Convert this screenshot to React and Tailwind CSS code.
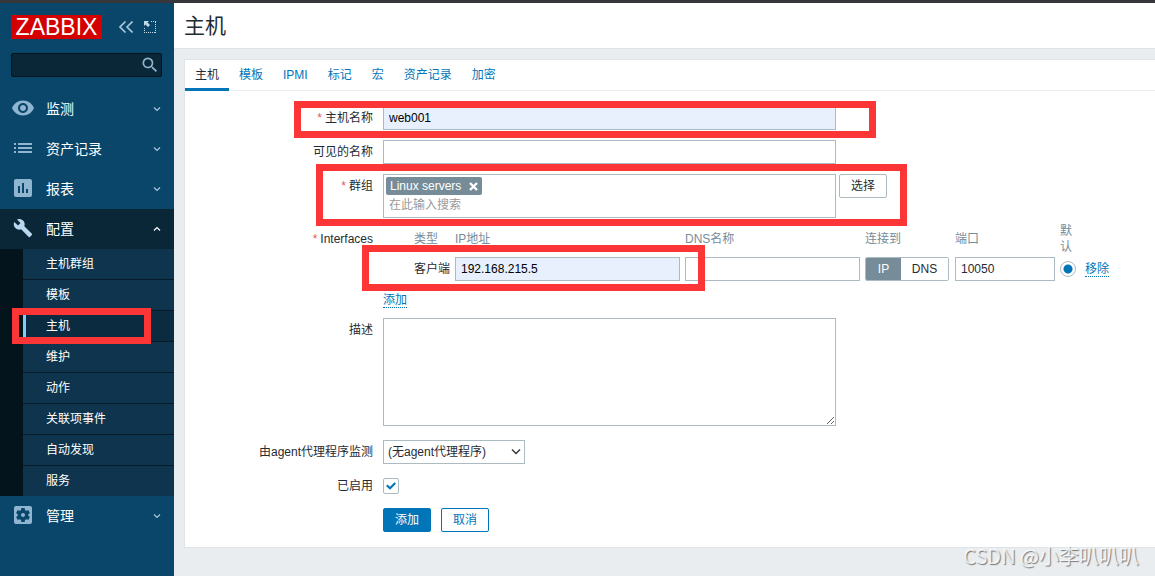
import { useState } from 'react'
import {
  MdAssessment,
  MdBuild,
  MdList,
  MdSearch,
  MdSettingsApplications,
  MdVisibility,
} from 'react-icons/md'

const configItems = [
  '主机群组',
  '模板',
  '主机',
  '维护',
  '动作',
  '关联项事件',
  '自动发现',
  '服务',
]

const tabs = ['主机', '模板', 'IPMI', '标记', '宏', '资产记录', '加密']

const inputClass =
  'block h-6 border border-[#acbbc2] bg-white px-[5px] text-xs text-[#1f2c33] outline-none focus:border-[#0275b8]'

const filledInputClass =
  'block h-6 border border-[#acbbc2] bg-[#e8f0fe] px-[5px] text-xs text-black outline-none focus:border-[#0275b8]'

const linkButtonClass =
  'h-4 cursor-pointer border-b border-dotted border-[#0275b8] text-xs leading-[14px] whitespace-nowrap text-[#0275b8]'

function Chevron({ up }) {
  return (
    <svg className="h-[6px] w-2" viewBox="0 0 8 6" fill="none">
      <path
        d={up ? 'M1 4.5 4 1.5 7 4.5' : 'M1 1.5 4 4.5 7 1.5'}
        stroke="currentColor"
        strokeWidth="1.2"
      />
    </svg>
  )
}

function MenuItem({ icon: Icon, iconClass = 'size-6', label, open }) {
  return (
    <a
      href="#"
      className={
        open
          ? 'flex h-10 items-center bg-[#0a2738] pr-[13px] pl-[11px] text-sm text-white'
          : 'flex h-10 items-center pr-[13px] pl-[11px] text-sm text-white'
      }
    >
      <span
        className={
          open
            ? 'flex w-6 justify-center pb-[2px] text-[#b8d8ee]'
            : 'flex w-6 justify-center pb-[2px] text-[#8fb5d1]'
        }
      >
        <Icon className={iconClass} />
      </span>
      <span className="ml-[11px] flex-1">{label}</span>
      <span className={open ? 'text-white' : 'text-[#a9c8de]'}>
        <Chevron up={open} />
      </span>
    </a>
  )
}

function Highlight({ className }) {
  return (
    <div
      className={`pointer-events-none absolute z-10 border-[7px] border-[#fc3636] ${className}`}
    />
  )
}

function Sidebar() {
  return (
    <aside className="w-[174px] shrink-0 bg-[#0a466a]">
      <div className="flex items-center pt-3 pl-[11px]">
        <a
          href="#"
          className="flex h-6 w-[91px] items-center justify-center bg-[#d40000] text-[23px] leading-6 text-white"
        >
          ZABBIX
        </a>
        <button type="button" aria-label="收起侧边栏" className="ml-[17px]">
          <svg className="h-3 w-[14px]" viewBox="0 0 14 12" fill="none">
            <path
              d="M6.5.5 1 6l5.500 5.500M13.500.5 8 6l5.500 5.500"
              stroke="#a9c8de"
              strokeWidth="1.600"
            />
          </svg>
        </button>
        <button type="button" aria-label="隐藏侧边栏" className="ml-[11px]">
          <svg className="size-3" viewBox="0 0 12 12" fill="none">
            <path
              d="M7 .5h5M.5 7v5M11.500 1v11M0 11.500h12"
              stroke="#c3d9e8"
              strokeDasharray="1 1"
            />
            <path d="M0 0h5L3.500 1.500 6 4 4 6 1.500 3.500 0 5z" fill="#c3d9e8" />
          </svg>
        </button>
      </div>

      <form
        role="search"
        className="mt-[14px] mr-3 ml-[11px] flex h-6 items-center rounded-xs border border-[#03141e] bg-[#0a2738]"
      >
        <input
          type="text"
          aria-label="搜索"
          className="min-w-0 flex-1 bg-transparent px-1 text-xs text-white outline-none"
        />
        <button type="button" aria-label="搜索" className="mr-[1px]">
          <MdSearch className="size-5 text-[#8fb5d1]" />
        </button>
      </form>

      <nav className="mt-3">
        <MenuItem icon={MdVisibility} label="监测" />
        <MenuItem icon={MdList} label="资产记录" />
        <MenuItem icon={MdAssessment} label="报表" />
        <MenuItem icon={MdBuild} iconClass="size-5" label="配置" open />
        <ul className="bg-[#04141d] pl-[23px]">
          {configItems.map((item) => (
            <li
              key={item}
              className="relative border-b border-[#061a27] last:border-b-0"
            >
              <a
                href="#"
                className={
                  item === '主机'
                    ? 'block h-[30px] border-l-[3px] border-[#7fcdfb] bg-[#0b2b40] pl-5 text-xs leading-[30px] text-white'
                    : 'block h-[30px] bg-[#0f344d] pl-[23px] text-xs leading-[30px] text-white'
                }
              >
                {item}
              </a>
              {item === '主机' ? (
                <Highlight className="-top-[3px] right-[23px] -bottom-[3px] -left-[11px]" />
              ) : null}
            </li>
          ))}
        </ul>
        <MenuItem icon={MdSettingsApplications} label="管理" />
      </nav>
    </aside>
  )
}

function FormRow({
  label,
  htmlFor,
  required,
  className = 'mb-[10px]',
  labelClass = 'leading-6',
  children,
}) {
  return (
    <div className={`relative flex ${className}`}>
      <label
        htmlFor={htmlFor}
        className={`mr-[10px] w-[188px] shrink-0 text-right ${labelClass}`}
      >
        {required ? <span className="mr-[3px] text-[#e45959]">*</span> : null}
        {label}
      </label>
      {children}
    </div>
  )
}

function InterfaceTable() {
  const [connect, setConnect] = useState('IP')

  return (
    <table className="border-collapse text-left">
      <thead>
        <tr className="h-8 leading-4 text-[#768d99]">
          <th className="w-[72px] min-w-[72px] pl-[31px] font-normal">类型</th>
          <th className="font-normal">IP地址</th>
          <th className="font-normal">DNS名称</th>
          <th className="font-normal">连接到</th>
          <th className="font-normal">端口</th>
          <th className="font-normal">
            <div className="w-4">默认</div>
          </th>
          <th />
        </tr>
      </thead>
      <tbody>
        <tr>
          <td className="pt-[2px] pl-[31px]">客户端</td>
          <td className="pt-[2px] pr-[5px]">
            <input
              type="text"
              aria-label="IP地址"
              defaultValue="192.168.215.5"
              className={`${filledInputClass} w-[225px]`}
            />
          </td>
          <td className="pt-[2px] pr-[5px]">
            <input
              type="text"
              aria-label="DNS名称"
              className={`${inputClass} w-[175px]`}
            />
          </td>
          <td className="pt-[2px] pr-[6px]">
            <div className="flex h-6 w-[84px] overflow-hidden rounded-xs border border-[#acbbc2]">
              {['IP', 'DNS'].map((type) => (
                <label
                  key={type}
                  className={`relative cursor-pointer text-center leading-[22px] ${
                    type === 'IP' ? 'w-[35px]' : 'flex-1'
                  } ${connect === type ? 'bg-[#768d99] text-white' : 'bg-white'}`}
                >
                  <input
                    type="radio"
                    name="connect"
                    className="sr-only"
                    checked={connect === type}
                    onChange={() => setConnect(type)}
                  />
                  {type}
                </label>
              ))}
            </div>
          </td>
          <td className="pt-[2px] pr-[5px]">
            <input
              type="text"
              aria-label="端口"
              defaultValue="10050"
              className={`${inputClass} w-[100px]`}
            />
          </td>
          <td className="pt-[2px] pr-[9px]">
            <input
              type="radio"
              name="default-interface"
              aria-label="默认"
              defaultChecked
              className="block size-4 appearance-none rounded-full border border-[#acbbc2] bg-white checked:bg-[radial-gradient(circle,#0275b8_4px,white_5px)]"
            />
          </td>
          <td className="pt-[2px]">
            <button type="button" className={`block ${linkButtonClass}`}>
              移除
            </button>
          </td>
        </tr>
      </tbody>
    </table>
  )
}

function HostForm() {
  return (
    <form className="py-[15px]">
      <FormRow label="主机名称" htmlFor="host" required>
        <input
          id="host"
          type="text"
          defaultValue="web001"
          className={`${filledInputClass} w-[453px]`}
        />
        <Highlight className="-top-[5px] left-[109px] h-[37px] w-[582px]" />
      </FormRow>

      <FormRow label="可见的名称" htmlFor="visible-name">
        <input
          id="visible-name"
          type="text"
          className={`${inputClass} w-[453px]`}
        />
      </FormRow>

      <FormRow label="群组" htmlFor="groups" required className="mb-[5px]">
        <div className="h-11 w-[453px] border border-[#acbbc2] p-[2px]">
          <span className="flex h-[18px] w-fit items-center rounded-xs bg-[#768d99] px-1 text-white">
            Linux servers
            <button type="button" aria-label="移除 Linux servers" className="ml-2">
              <svg className="size-[9px]" viewBox="0 0 9 9" fill="none">
                <path
                  d="M1 1l7 7M8 1 1 8"
                  stroke="currentColor"
                  strokeWidth="2.400"
                />
              </svg>
            </button>
          </span>
          <input
            id="groups"
            type="text"
            placeholder="在此输入搜索"
            className="block h-5 w-full px-[3px] text-xs outline-none placeholder:text-[#9a9a9a]"
          />
        </div>
        <button
          type="button"
          className="ml-[3px] h-6 w-12 rounded-xs border border-[#acbbc2] bg-white"
        >
          选择
        </button>
        <Highlight className="-top-[10px] left-[131px] h-[62px] w-[591px]" />
      </FormRow>

      <FormRow label="Interfaces" required labelClass="leading-8">
        <div>
          <InterfaceTable />
          <button type="button" className={`mt-[11px] block ${linkButtonClass}`}>
            添加
          </button>
        </div>
        <Highlight className="top-[22px] left-[177px] h-[46px] w-[343px]" />
      </FormRow>

      <FormRow label="描述" htmlFor="description" className="mb-[14px]">
        <textarea
          id="description"
          className="block h-[108px] w-[453px] resize border border-[#acbbc2] px-[5px] py-1 outline-none"
        />
      </FormRow>

      <FormRow label="由agent代理程序监测" htmlFor="proxy">
        <div className="relative">
          <select
            id="proxy"
            className="block h-6 w-[142px] appearance-none border border-[#acbbc2] bg-white px-1 text-xs text-[#1f2c33]"
          >
            <option>(无agent代理程序)</option>
          </select>
          <svg
            className="pointer-events-none absolute top-2 right-1 h-[7px] w-[10px]"
            viewBox="0 0 10 7"
            fill="none"
          >
            <path d="M1 1.500 5 5.500 9 1.500" stroke="#333" strokeWidth="1.400" />
          </svg>
        </div>
      </FormRow>

      <FormRow label="已启用" htmlFor="enabled">
        <div className="relative flex items-center">
          <input
            id="enabled"
            type="checkbox"
            defaultChecked
            className="peer size-4 appearance-none rounded-xs border border-[#acbbc2] bg-white"
          />
          <svg
            className="pointer-events-none absolute left-[3px] hidden h-2 w-[10px] peer-checked:block"
            viewBox="0 0 10 8"
            fill="none"
          >
            <path d="M.8 3.300 4 6.300 9.300 1" stroke="#0275b8" strokeWidth="2.200" />
          </svg>
        </div>
      </FormRow>

      <div className="flex gap-[10px] pl-[198px]">
        <button
          type="submit"
          className="h-6 w-12 rounded-xs border border-[#0275b8] bg-[#0275b8] text-white"
        >
          添加
        </button>
        <button
          type="button"
          className="h-6 w-12 rounded-xs border border-[#0275b8] bg-white text-[#0275b8]"
        >
          取消
        </button>
      </div>
    </form>
  )
}

function App() {
  const [activeTab, setActiveTab] = useState('主机')

  return (
    <div className="relative flex min-h-screen flex-col overflow-hidden bg-[#e9edf0] font-['Liberation_Sans','Noto_Sans_CJK_SC',sans-serif] text-xs text-[#1f2c33]">
      <div className="h-[3px] bg-[#36363b]" />
      <div className="flex flex-1">
        <Sidebar />

        <main className="min-w-0 flex-1">
          <header className="h-[46px] border-b border-[#dfe4e7] bg-white pl-[10px]">
            <h1 className="text-[21px] leading-[45px]">主机</h1>
          </header>

          <section className="mt-[10px] ml-[10px] border-y border-l border-[#dfe4e7] bg-white">
            <nav className="flex h-[31px] border-b border-[#e9edf0]">
              {tabs.map((tab) => (
                <button
                  key={tab}
                  type="button"
                  onClick={() => setActiveTab(tab)}
                  className={
                    activeTab === tab
                      ? 'h-[31px] cursor-pointer border-b-[3px] border-[#0275b8] px-[10px] pt-[2px]'
                      : 'h-[31px] cursor-pointer border-b-[3px] border-transparent px-[10px] pt-[2px] text-[#0275b8]'
                  }
                >
                  {tab}
                </button>
              ))}
            </nav>
            <HostForm />
          </section>
        </main>
      </div>

      <div className="pointer-events-none absolute right-4 bottom-[6px] font-['Noto_Sans_CJK_SC',sans-serif] text-xl leading-7 text-white/80 [text-shadow:1px_1px_1px_#777]">
        CSDN @小李叭叭叭
      </div>
    </div>
  )
}

export default App
